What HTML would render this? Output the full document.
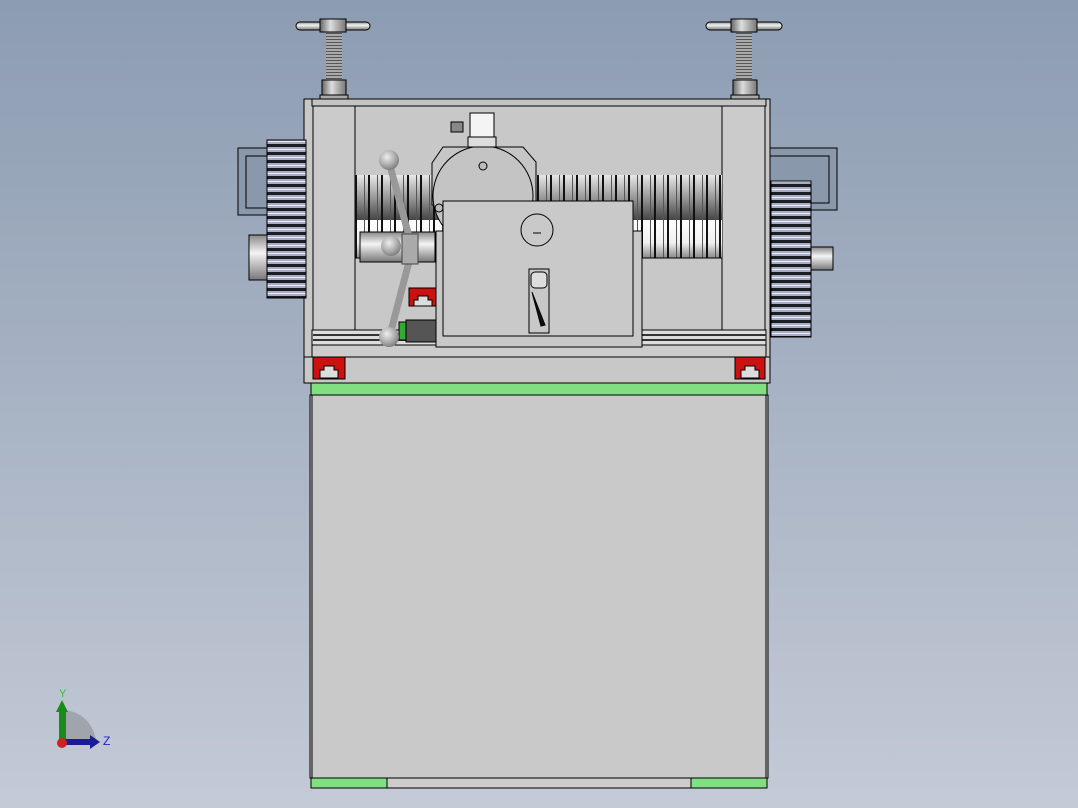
<!DOCTYPE html>
<html><head><style>html,body{margin:0;padding:0}body{width:1078px;height:808px;overflow:hidden;background:linear-gradient(#8c9cb2,#c4cad6)}</style></head>
<body>
<svg width="1078" height="808" viewBox="0 0 1078 808" xmlns="http://www.w3.org/2000/svg" style="position:absolute;left:0;top:0">
<defs>
<linearGradient id="rollT" x1="0" y1="0" x2="0" y2="1"><stop offset="0" stop-color="#e8e8e8"/><stop offset=".5" stop-color="#999"/><stop offset="1" stop-color="#444"/></linearGradient>
<linearGradient id="rollB" x1="0" y1="0" x2="0" y2="1"><stop offset="0" stop-color="#fff"/><stop offset=".6" stop-color="#f0f0f0"/><stop offset="1" stop-color="#888"/></linearGradient>
<linearGradient id="cyl" x1="0" y1="0" x2="1" y2="0"><stop offset="0" stop-color="#666"/><stop offset=".4" stop-color="#ddd"/><stop offset="1" stop-color="#777"/></linearGradient>
<linearGradient id="cylH" x1="0" y1="0" x2="0" y2="1"><stop offset="0" stop-color="#888"/><stop offset=".4" stop-color="#f4f4f4"/><stop offset="1" stop-color="#777"/></linearGradient>
<pattern id="gear" width="10" height="8" patternUnits="userSpaceOnUse"><rect width="10" height="8" fill="#a8adc2"/><rect y="0" width="10" height="3" fill="#1c1c24"/><rect y="5" width="10" height="1" fill="#eef"/></pattern>
<pattern id="thread" width="4" height="3" patternUnits="userSpaceOnUse"><rect width="4" height="3" fill="#aaa"/><rect width="4" height="1" fill="#555"/></pattern>
<pattern id="rib" x="355" width="13" height="100" patternUnits="userSpaceOnUse"><rect x="0" width="2" height="100" fill="#111"/><rect x="9" width="1" height="100" fill="#555"/></pattern>
<radialGradient id="ball" cx=".4" cy=".35" r=".7"><stop offset="0" stop-color="#eee"/><stop offset=".6" stop-color="#aaa"/><stop offset="1" stop-color="#777"/></radialGradient>
</defs>
<g stroke="#000" stroke-width="1">
<g>
<rect x="296" y="22" width="74" height="8" rx="4" fill="url(#cylH)"/>
<rect x="320" y="19" width="26" height="13" fill="url(#cyl)"/>
<rect x="326" y="33" width="16" height="52" fill="url(#thread)" stroke="none"/>
<rect x="322" y="80" width="24" height="15" fill="url(#cyl)"/>
<rect x="320" y="95" width="28" height="5" fill="#aaa"/>
<rect x="706" y="22" width="76" height="8" rx="4" fill="url(#cylH)"/>
<rect x="731" y="19" width="26" height="13" fill="url(#cyl)"/>
<rect x="736" y="33" width="16" height="52" fill="url(#thread)" stroke="none"/>
<rect x="733" y="80" width="24" height="15" fill="url(#cyl)"/>
<rect x="731" y="95" width="28" height="5" fill="#aaa"/>
</g>
<rect x="238" y="148" width="72" height="67" fill="#8a98ab"/>
<rect x="246" y="156" width="64" height="52" fill="none"/>
<rect x="770" y="148" width="67" height="62" fill="#8a98ab"/>
<rect x="770" y="156" width="59" height="47" fill="none"/>
<rect x="304" y="99" width="466" height="258" fill="#c8c8c8"/>
<rect x="312" y="99" width="454" height="7" fill="#c4c4c4"/>
<rect x="313" y="106" width="42" height="224" fill="#cbcbcb"/>
<rect x="722" y="106" width="43" height="224" fill="#cbcbcb"/>
<rect x="312" y="330" width="454" height="15" fill="#ddd"/>
<g stroke="none" fill="#333"><rect x="313" y="334" width="130" height="2"/><rect x="313" y="339" width="130" height="2"/><rect x="642" y="334" width="124" height="2"/><rect x="642" y="339" width="124" height="2"/></g>
<rect x="312" y="345" width="454" height="12" fill="#ccc"/>
<rect x="304" y="357" width="466" height="26" fill="#c8c8c8"/>
<rect x="355" y="175" width="367" height="45" fill="url(#rollT)" stroke="none"/>
<rect x="355" y="220" width="367" height="38" fill="url(#rollB)" stroke="none"/>
<rect x="355" y="175" width="367" height="83" fill="url(#rib)" stroke="none"/>
<line x1="355" y1="258" x2="722" y2="258"/>
<path d="M432 163 L443 147 L523 147 L536 162 L536 205 L432 205 Z" fill="#c6c6c6"/>
<circle cx="483" cy="196" r="50" fill="#c4c4c4"/>
<circle cx="483" cy="166" r="4" fill="#bbb"/>
<circle cx="439" cy="208" r="4" fill="#bbb"/>
<rect x="470" y="113" width="24" height="26" fill="#f4f4f4"/>
<rect x="468" y="137" width="28" height="10" fill="#ddd"/>
<rect x="451" y="122" width="12" height="10" fill="#888"/>
<rect x="360" y="232" width="75" height="30" fill="url(#cylH)"/>
<rect x="436" y="231" width="206" height="116" fill="#c8c8c8"/>
<rect x="443" y="201" width="190" height="135" fill="#c9c9c9"/>
<circle cx="537" cy="230" r="16" fill="none"/>
<path d="M533 233 h8" />
<rect x="529" y="269" width="20" height="64" fill="#c8c8c8"/>
<rect x="531" y="272" width="16" height="16" rx="4" fill="#ddd"/>
<path d="M532 292 L545 325 L541 326 L533 296Z" fill="#111"/>
<rect x="409" y="288" width="27" height="18" fill="#cc1111"/>
<rect x="406" y="320" width="30" height="22" fill="#555"/>
<rect x="399" y="322" width="7" height="18" fill="#3a3" />
<rect x="313" y="357" width="32" height="22" fill="#cc1111"/>
<rect x="735" y="357" width="30" height="22" fill="#cc1111"/>
<path d="M320 378 v-8 h4 v-4 h10 v4 h4 v8Z" fill="#ddd"/>
<path d="M741 378 v-8 h4 v-4 h10 v4 h4 v8Z" fill="#ddd"/>
<path d="M414 306 v-6 h4 v-4 h10 v4 h4 v6Z" fill="#ddd"/>
<rect x="249" y="235" width="21" height="45" fill="url(#cylH)"/>
<rect x="267" y="140" width="39" height="158" fill="url(#gear)"/>
<rect x="811" y="247" width="22" height="23" fill="url(#cylH)"/>
<rect x="771" y="181" width="40" height="156" fill="url(#gear)"/>
<g stroke="#999">
<line x1="389" y1="162" x2="410" y2="240" stroke-width="7" stroke-linecap="round"/>
<line x1="412" y1="250" x2="390" y2="335" stroke-width="7" stroke-linecap="round"/>
<rect x="402" y="234" width="16" height="30" fill="#aaa" stroke="#444"/>
</g>
<circle cx="389" cy="160" r="10" fill="url(#ball)" stroke="none"/>
<circle cx="391" cy="246" r="10" fill="url(#ball)" stroke="none"/>
<circle cx="389" cy="337" r="10" fill="url(#ball)" stroke="none"/>
<rect x="311" y="383" width="456" height="12" fill="#80df80"/>
<rect x="310" y="395" width="458" height="383" fill="#c9c9c9"/>
<rect x="312" y="395" width="454" height="383" fill="none"/>
<rect x="311" y="778" width="76" height="10" fill="#80df80"/>
<rect x="387" y="778" width="304" height="10" fill="#ccc"/>
<rect x="691" y="778" width="76" height="10" fill="#80df80"/>
</g>
<path d="M62 742 L62 710 A34 34 0 0 1 96 742 Z" fill="#a0a4ac"/>
<rect x="59" y="710" width="7" height="32" fill="#1a8a1a"/>
<path d="M56 712 L62 700 L68 712Z" fill="#1a8a1a"/>
<rect x="62" y="739" width="30" height="6" fill="#1a1a9a"/>
<path d="M90 735 L100 742 L90 749Z" fill="#1a1a9a"/>
<circle cx="62" cy="743" r="5" fill="#c22"/>
<text x="59" y="697" font-family="Liberation Sans,sans-serif" font-size="11" fill="#2c2">Y</text>
<text x="103" y="745" font-family="Liberation Sans,sans-serif" font-size="12" fill="#22c">Z</text>
</svg>
</body></html>
